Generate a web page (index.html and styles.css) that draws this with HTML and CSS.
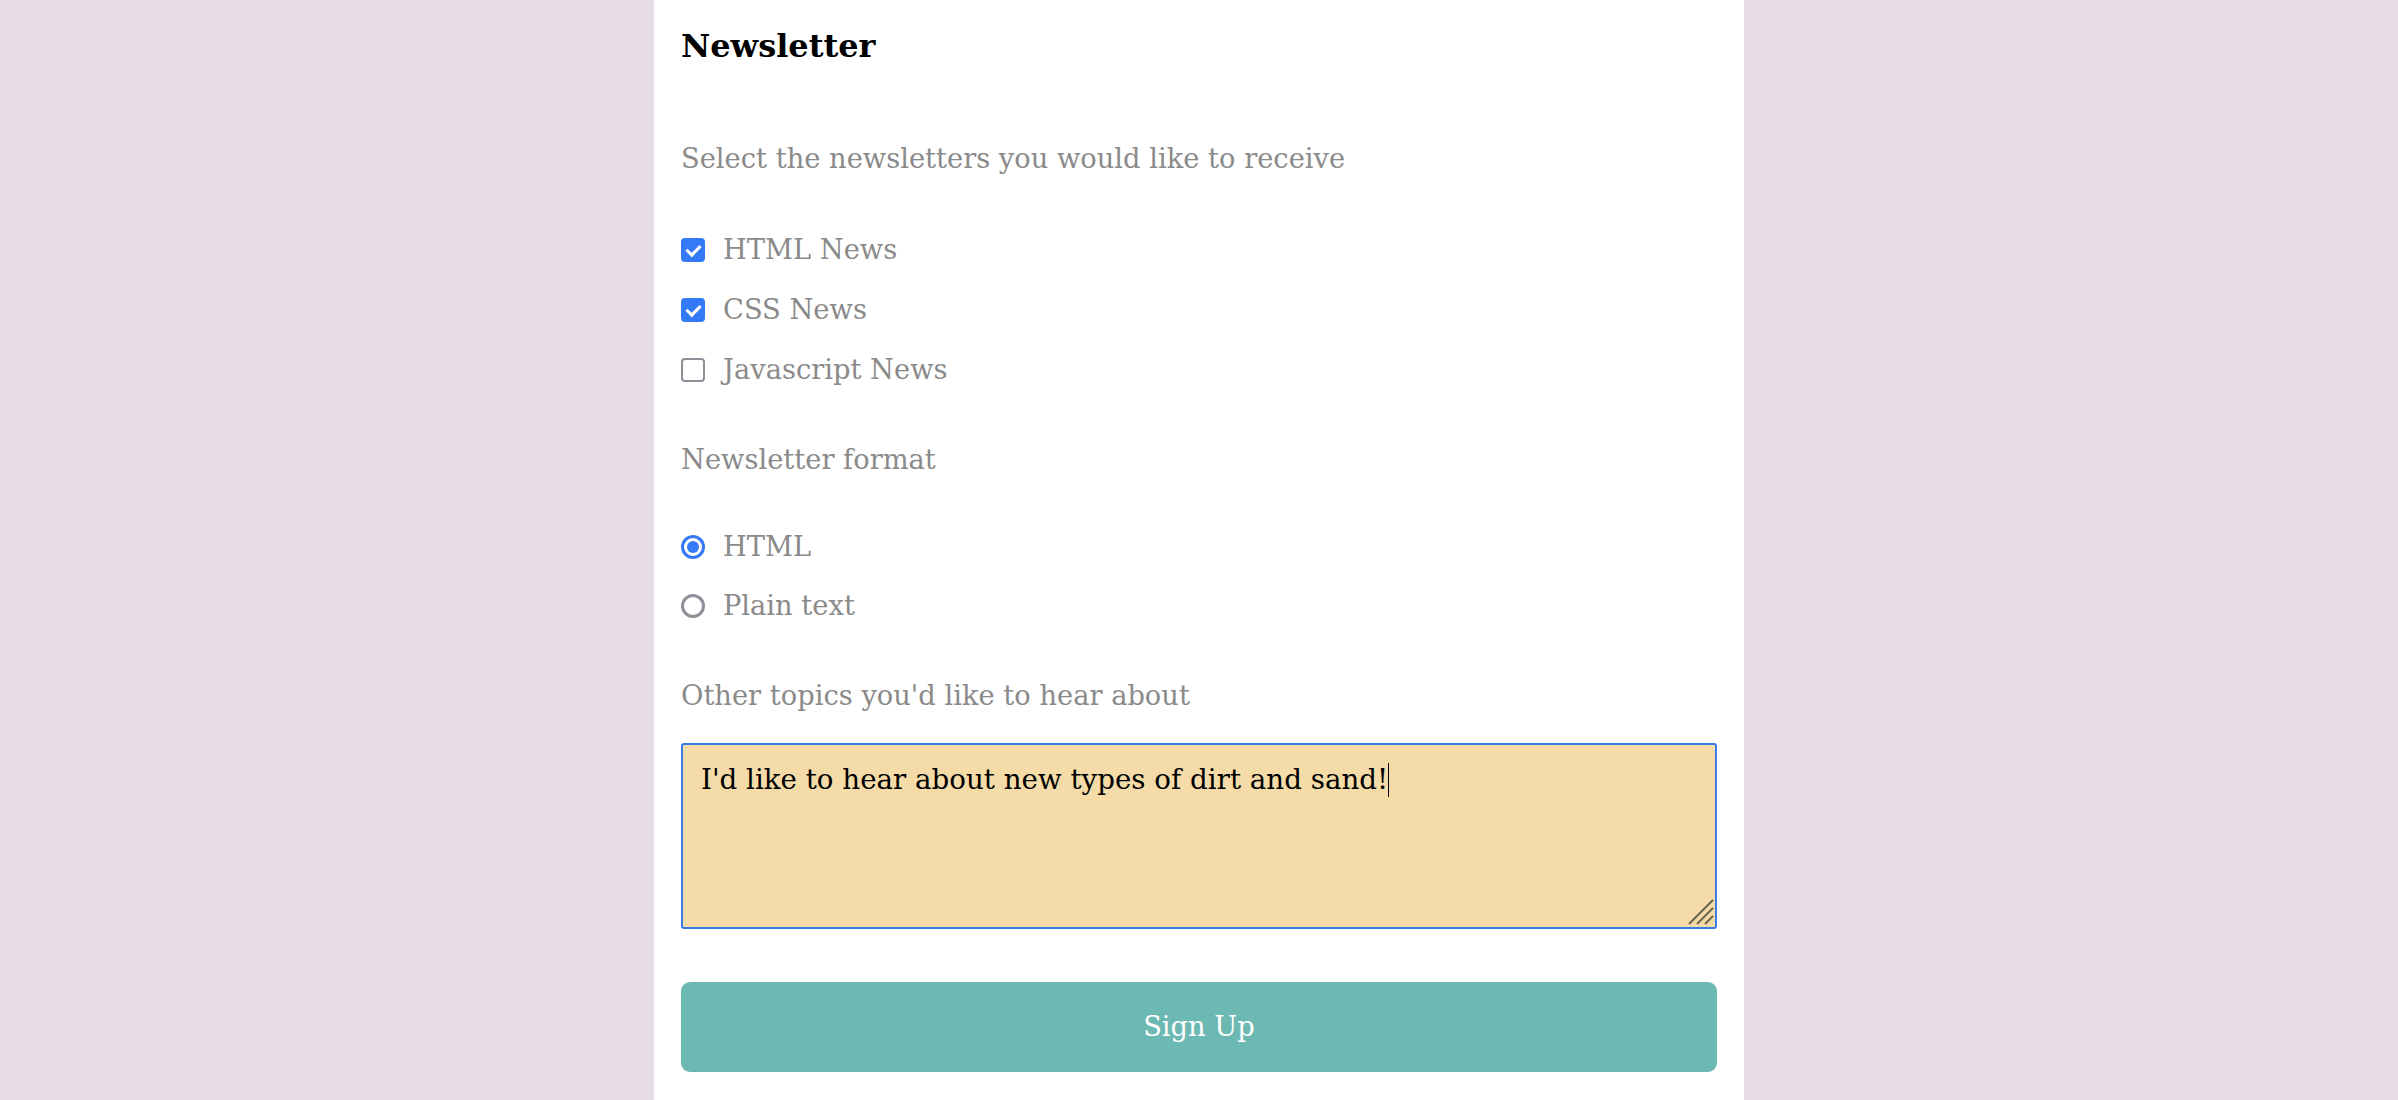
FILE: index.html
```html
<!DOCTYPE html>
<html lang="en">
<head>
<meta charset="utf-8">
<title>Newsletter</title>
<link rel="stylesheet" href="styles.css">
</head>
<body>
<main class="panel">
  <h2 class="title">Newsletter</h2>

  <p class="legend legend-first">Select the newsletters you would like to receive</p>
  <div class="group group-checks">
    <label class="option"><input class="check" type="checkbox" checked><span>HTML News</span></label>
    <label class="option"><input class="check" type="checkbox" checked><span>CSS News</span></label>
    <label class="option"><input class="check" type="checkbox"><span>Javascript News</span></label>
  </div>

  <p class="legend legend-format">Newsletter format</p>
  <div class="group group-radios">
    <label class="option"><input class="radio" type="radio" name="format" checked><span>HTML</span></label>
    <label class="option"><input class="radio" type="radio" name="format"><span>Plain text</span></label>
  </div>

  <p class="legend legend-topics">Other topics you'd like to hear about</p>
  <div class="field">
    <textarea class="topics">I'd like to hear about new types of dirt and sand!</textarea>
    <span class="caret" aria-hidden="true"></span>
    <svg class="grip" width="26" height="26" viewBox="0 0 26 26" aria-hidden="true">
      <path d="M1 25 L25 1 M9 25 L25 9 M17 25 L25 17" stroke="#6b6552" stroke-width="2" fill="none"/>
    </svg>
  </div>

  <button class="signup" type="button">Sign Up</button>
</main>
</body>
</html>
```

FILE: styles.css
```css
html, body {
  margin: 0;
  padding: 0;
}

body {
  background: #e6dce4;
  font-family: "DejaVu Serif", "Liberation Serif", serif;
  font-size: 27.3px;
  line-height: 40px;
}

.panel {
  box-sizing: border-box;
  width: 1090px;
  min-height: 100vh;
  margin: 0 auto;
  padding: 0 27px;
  background: #ffffff;
  display: flex;
  flex-direction: column;
}

.title {
  margin: 24px 0 71px;
  font-size: 32px;
  line-height: 44px;
  font-weight: bold;
  color: #000;
}

.legend {
  margin: 0;
  color: #8a8a8a;
}

.legend-first { margin-bottom: 51px; }
.legend-format { margin-bottom: 47px; }
.legend-topics { margin-bottom: 27px; }

.group {
  display: flex;
  flex-direction: column;
}

.group-checks {
  gap: 20px;
  margin-bottom: 50px;
}

.group-radios {
  gap: 19px;
  margin-bottom: 50px;
}

.option {
  display: flex;
  align-items: center;
  gap: 18px;
  height: 40px;
  color: #8a8a8a;
}

.check,
.radio {
  -webkit-appearance: none;
  appearance: none;
  box-sizing: border-box;
  width: 24px;
  height: 24px;
  margin: 0;
  flex: none;
  position: relative;
  background: #fff;
  border: 2.5px solid #8f8f99;
}

.check {
  border-radius: 4px;
}

.check:checked {
  background: #3479f5;
  border-color: #3479f5;
}

.check:checked::after {
  content: "";
  position: absolute;
  left: 6px;
  top: 2px;
  width: 6px;
  height: 11px;
  border-right: 3px solid #fff;
  border-bottom: 3px solid #fff;
  transform: rotate(45deg);
}

.radio {
  border-radius: 50%;
  border-width: 3px;
}

.radio:checked {
  border-color: #3479f5;
}

.radio:checked::after {
  content: "";
  position: absolute;
  left: 3px;
  top: 3px;
  width: 12px;
  height: 12px;
  border-radius: 50%;
  background: #3479f5;
}

.field {
  position: relative;
  margin: 0 0 53px;
}

.topics {
  display: block;
  box-sizing: border-box;
  width: 100%;
  height: 186px;
  margin: 0;
  padding: 15px 18px;
  background: #f4dba7;
  border: 2px solid #3a7be8;
  border-radius: 3px;
  outline: none;
  resize: none;
  font-family: inherit;
  font-size: 27.7px;
  line-height: 40px;
  color: #000;
}

.caret {
  position: absolute;
  left: 707px;
  top: 20px;
  width: 1px;
  height: 34px;
  background: #000;
}

.grip {
  position: absolute;
  right: 3px;
  bottom: 4px;
  pointer-events: none;
}

.signup {
  display: block;
  width: 100%;
  height: 90px;
  margin: 0;
  padding: 0;
  border: none;
  border-radius: 9px;
  background: #6cb8b2;
  color: #fff;
  font-family: inherit;
  font-size: 27.3px;
  line-height: 40px;
}
```
